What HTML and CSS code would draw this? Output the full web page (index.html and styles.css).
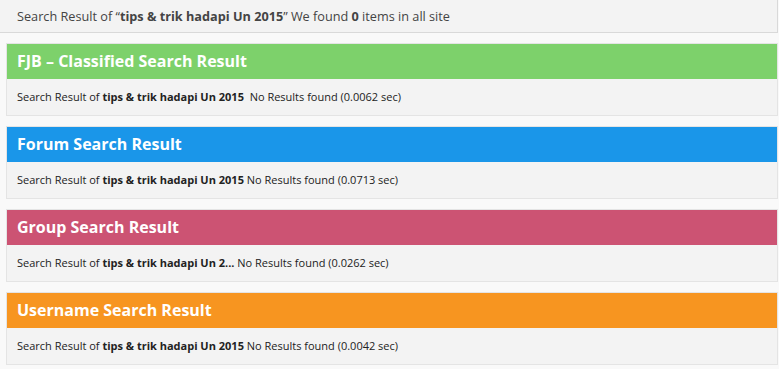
FILE: index.html
```html
<!DOCTYPE html>
<html lang="en">
<head>
  <meta charset="UTF-8">
  <title>Search Result</title>
  <link rel="stylesheet" href="styles.css">
</head>
<body>
  <div class="wrap">
    <div class="summary">
      Search Result of &ldquo;<b>tips &amp; trik hadapi Un 2015</b>&rdquo; We found <b>0</b> items in all site
    </div>

    <div class="box">
      <div class="box_head green">FJB &ndash; Classified Search Result</div>
      <div class="box_body">Search Result of <b>tips &amp; trik hadapi Un 2015</b>&nbsp; No Results found (0.0062 sec)</div>
    </div>

    <div class="box">
      <div class="box_head blue">Forum Search Result</div>
      <div class="box_body">Search Result of <b>tips &amp; trik hadapi Un 2015</b> No Results found (0.0713 sec)</div>
    </div>

    <div class="box">
      <div class="box_head pink">Group Search Result</div>
      <div class="box_body">Search Result of <b>tips &amp; trik hadapi Un 2...</b> No Results found (0.0262 sec)</div>
    </div>

    <div class="box">
      <div class="box_head orange">Username Search Result</div>
      <div class="box_body">Search Result of <b>tips &amp; trik hadapi Un 2015</b> No Results found (0.0042 sec)</div>
    </div>
  </div>
</body>
</html>
```

FILE: styles.css
```css
body {
  margin: 0;
  background: #f9f9f9;
  font-family: "Open Sans", "Noto Sans", sans-serif;
  color: #333;
}
.wrap {
  width: 772px;
  padding-left: 6px;
}
.summary {
  margin-left: -6px;
  height: 33px;
  line-height: 32px;
  padding-left: 17px;
  font-size: 12.7px;
  color: #444;
  background: #f3f3f3;
  border-right: 1px solid #d9d9d9;
  border-bottom: 1px solid #d9d9d9;
  box-sizing: border-box;
  margin-bottom: 10px;
}
.box {
  border: 1px solid #e4e4e4;
  background: #f3f3f3;
  margin-bottom: 10px;
}
.box_head {
  height: 35px;
  line-height: 35px;
  padding-left: 10px;
  font-size: 16px;
  font-weight: bold;
  color: #fff;
}
.box_body {
  height: 36px;
  line-height: 36px;
  padding-left: 10px;
  font-size: 11px;
  color: #222;
}
.green { background: #7dd16b; }
.blue { background: #1a96e9; }
.pink { background: #cc5373; }
.orange { background: #f79520; }
```
